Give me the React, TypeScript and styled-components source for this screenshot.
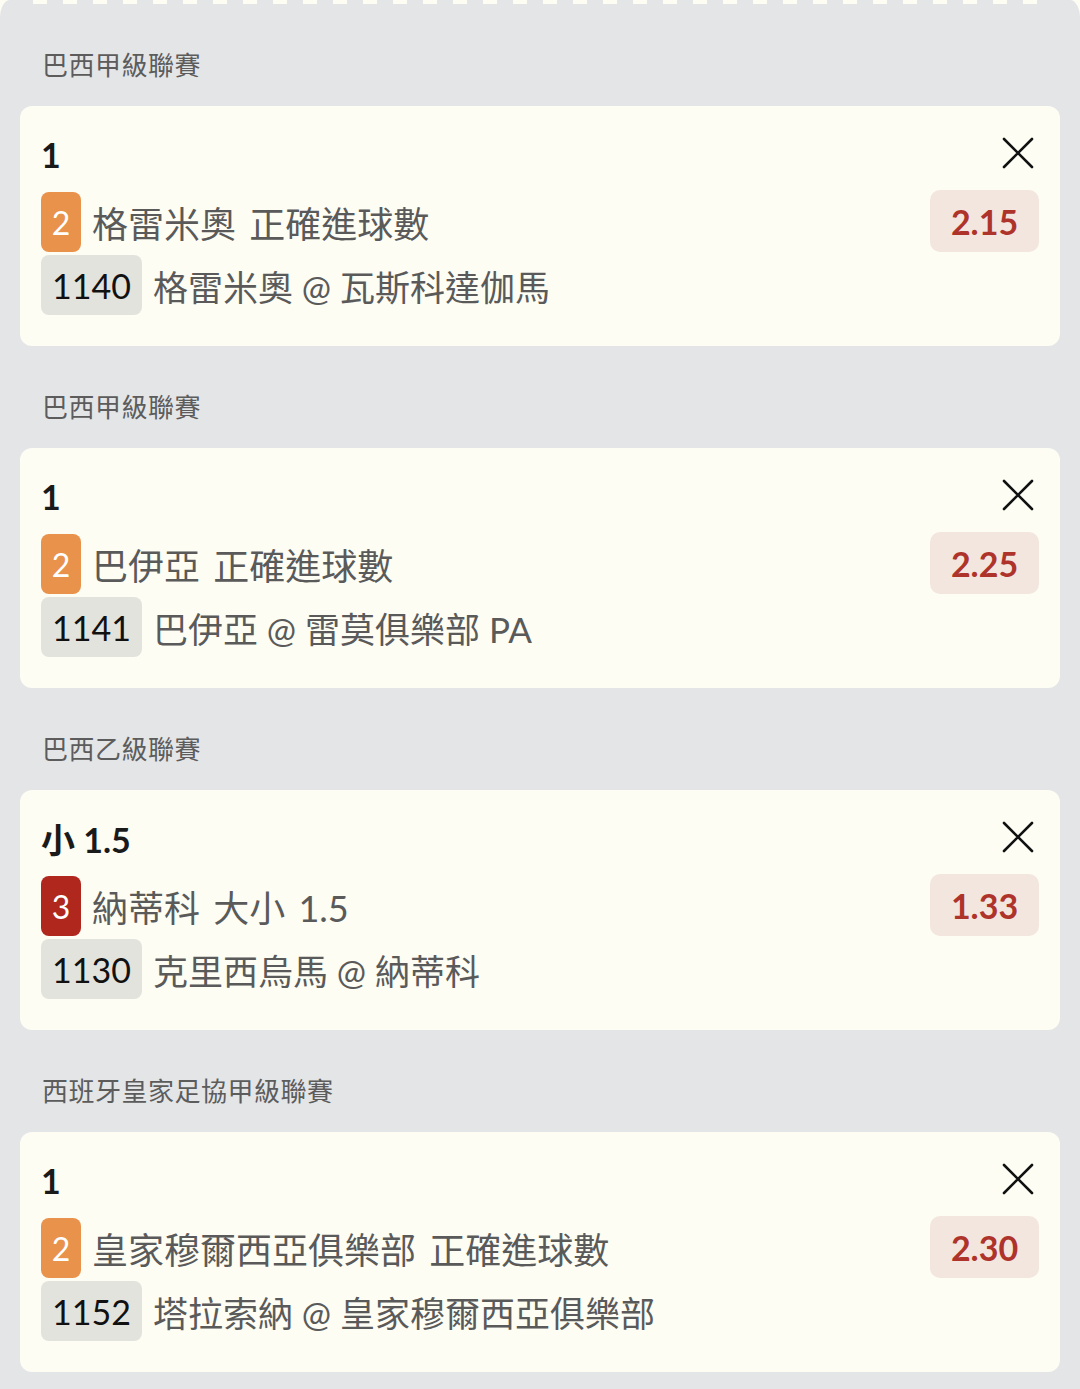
import React from 'react'
import styled, { createGlobalStyle } from 'styled-components'

const GlobalStyle = createGlobalStyle`
  html, body {
    margin: 0;
    padding: 0;
    background: #fdfdf4;
  }
  body {
    font-family: Lato, "Noto Sans CJK TC", sans-serif;
  }
`

const Panel = styled.div`
  display: flex;
  flex-direction: column;
  background: #e4e5e7;
  border-radius: 10px 10px 0 0 / 18px 18px 0 0;
  padding: 0 20px 18px;
  min-height: 100vh;
  box-sizing: border-box;
`

const Perforation = styled.div`
  height: 4px;
  margin: 0 22px 0 13px;
  background: repeating-linear-gradient(
    to right,
    #fdfdf4 0 14px,
    transparent 14px 30px
  );
`

const Section = styled.section`
  display: flex;
  flex-direction: column;
`

const League = styled.div`
  height: 102px;
  box-sizing: border-box;
  padding: 16px 0 0 22px;
  display: flex;
  align-items: center;
  font-family: "Noto Sans CJK TC", sans-serif;
  font-size: 26px;
  color: #5c5c5c;
  letter-spacing: 0.5px;
`

const Card = styled.div`
  display: grid;
  grid-template-columns: 1fr auto;
  grid-template-rows: 62px 60px 60px;
  row-gap: 3px;
  height: 240px;
  box-sizing: border-box;
  padding: 22px 21px 30px 21px;
  background: #fdfdf4;
  border-radius: 12px;
`

const Title = styled.div`
  display: flex;
  align-items: center;
  font-family: Lato, "Noto Sans CJK TC", sans-serif;
  font-weight: 700;
  font-size: 34px;
  color: #1a1a1a;
  padding-bottom: 10px;
`

const CloseButton = styled.button`
  justify-self: end;
  align-self: start;
  width: 42px;
  height: 42px;
  padding: 0;
  margin-top: 4px;
  border: none;
  background: none;
  display: flex;
  align-items: center;
  justify-content: center;
  cursor: pointer;
`

const Line = styled.div<{ $market?: boolean }>`
  display: flex;
  align-items: center;
  gap: 11px;
  font-family: Lato, "Noto Sans CJK TC", sans-serif;
  font-weight: 400;
  font-size: ${p => (p.$market ? '36px' : '35px')};
  color: #5a5a5a;
  white-space: pre;
  word-spacing: ${p => (p.$market ? '4px' : '0')};
  padding-bottom: 2px;
`

const Tag = styled.span<{ $tone: 'orange' | 'red' | 'grey' }>`
  display: flex;
  align-items: center;
  justify-content: center;
  height: 60px;
  min-width: 40px;
  box-sizing: border-box;
  padding: 0 ${p => (p.$tone === 'grey' ? '11px' : '0')};
  border-radius: 8px;
  font-family: Lato, sans-serif;
  font-weight: 400;
  word-spacing: 0;
  font-size: ${p => (p.$tone === 'grey' ? '34px' : '32px')};
  color: ${p => (p.$tone === 'grey' ? '#111' : '#fff')};
  background: ${p =>
    p.$tone === 'orange' ? '#e9924b' : p.$tone === 'red' ? '#b0271e' : '#e3e3dd'};
`

const Odds = styled.div`
  justify-self: end;
  align-self: start;
  margin-top: -3px;
  width: 109px;
  height: 62px;
  display: flex;
  align-items: center;
  justify-content: center;
  border-radius: 10px;
  background: #f3e6df;
  font-family: Lato, sans-serif;
  font-weight: 700;
  font-size: 34px;
  color: #ae342b;
`

const Empty = styled.div``

const CloseIcon = () => (
  <svg width="32" height="32" viewBox="0 0 32 32" fill="none">
    <path d="M2 2 L30 30 M30 2 L2 30" stroke="#111" strokeWidth="2.6" strokeLinecap="round" />
  </svg>
)

type Bet = {
  league: string
  pick: string
  level: number
  market: string
  odds: string
  code: string
  event: string
}

const bets: Bet[] = [
  { league: '巴西甲級聯賽', pick: '1', level: 2, market: '格雷米奧 正確進球數', odds: '2.15', code: '1140', event: '格雷米奧 @ 瓦斯科達伽馬' },
  { league: '巴西甲級聯賽', pick: '1', level: 2, market: '巴伊亞 正確進球數', odds: '2.25', code: '1141', event: '巴伊亞 @ 雷莫俱樂部 PA' },
  { league: '巴西乙級聯賽', pick: '小 1.5', level: 3, market: '納蒂科 大小 1.5', odds: '1.33', code: '1130', event: '克里西烏馬 @ 納蒂科' },
  { league: '西班牙皇家足協甲級聯賽', pick: '1', level: 2, market: '皇家穆爾西亞俱樂部 正確進球數', odds: '2.30', code: '1152', event: '塔拉索納 @ 皇家穆爾西亞俱樂部' },
]

function App() {
  return (
    <>
      <GlobalStyle />
      <Panel>
        <Perforation />
        {bets.map((bet, i) => (
          <Section key={i}>
            <League>{bet.league}</League>
            <Card>
              <Title>{bet.pick}</Title>
              <CloseButton aria-label="remove">
                <CloseIcon />
              </CloseButton>
              <Line $market>
                <Tag $tone={bet.level === 3 ? 'red' : 'orange'}>{bet.level}</Tag>
                {bet.market}
              </Line>
              <Odds>{bet.odds}</Odds>
              <Line>
                <Tag $tone="grey">{bet.code}</Tag>
                {bet.event}
              </Line>
              <Empty />
            </Card>
          </Section>
        ))}
      </Panel>
    </>
  )
}

export default App
